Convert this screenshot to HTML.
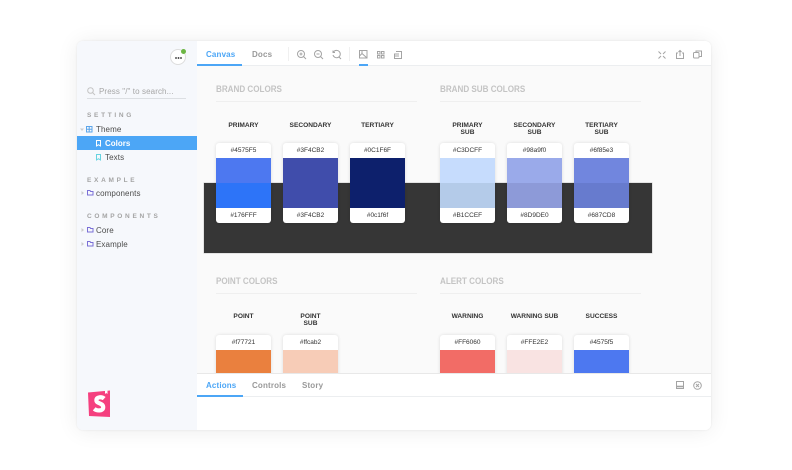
<!DOCTYPE html>
<html>
<head>
<meta charset="utf-8">
<style>
*{margin:0;padding:0;box-sizing:border-box}
html,body{width:792px;height:470px;overflow:hidden;background:#fff;font-family:"Liberation Sans",sans-serif}
.a{position:absolute}
#win{position:absolute;left:77px;top:41px;width:634px;height:389px;border-radius:6px;background:#fff;box-shadow:0 1px 22px rgba(0,0,0,.075),0 0 2px rgba(0,0,0,.08);overflow:hidden}
#page{position:absolute;left:0;top:0;width:792px;height:470px}
.t{position:absolute;white-space:nowrap;filter:blur(.3px)}
.lab{position:absolute;width:80px;text-align:center;font-size:6.6px;line-height:7.2px;font-weight:bold;color:#333;filter:blur(.25px)}
.card{position:absolute;width:55px;background:#fff;border-radius:3px;box-shadow:0 0 3px rgba(0,0,0,.12);overflow:hidden}
.hex{position:absolute;left:0;width:55px;text-align:center;font-size:6.5px;line-height:15px;height:15px;color:#333;filter:blur(.25px)}
.h2{position:absolute;font-size:9.5px;font-weight:bold;color:#c4c4c4;white-space:nowrap;transform:scaleX(.85);transform-origin:0 0;filter:blur(.25px)}
.hr{position:absolute;height:1px;background:#efefef;width:201px}
.cap{position:absolute;font-size:6.5px;font-weight:bold;color:#a4a4a4;letter-spacing:2.7px;white-space:nowrap;filter:blur(.25px)}
.nav{position:absolute;font-size:8px;color:#4c4c4c;white-space:nowrap;filter:blur(.25px);letter-spacing:.1px}
.tab{font-size:8px;line-height:10px;font-weight:bold;color:#999;letter-spacing:.15px}
svg{position:absolute;overflow:visible}
svg.i{fill:none;stroke:#a4a4a4;stroke-width:1;width:10px;height:10px;filter:blur(.2px)}
</style>
</head>
<body>
<div id="page">
<div id="win"></div>

<!-- sidebar -->
<div class="a" style="left:77px;top:41px;width:120px;height:389px;background:#f6f8fc;border-radius:6px 0 0 6px"></div>
<div class="a" style="left:170px;top:49px;width:16px;height:16px;border-radius:50%;background:#fff;border:1px solid #ddd"></div>
<div class="a" style="left:175px;top:56.5px;width:7px;height:2px;background:radial-gradient(circle at 1px 1px,#555 1px,transparent 1px) 0 0/2.5px 2px"></div>
<div class="a" style="left:181px;top:49px;width:5px;height:5px;border-radius:50%;background:#6cb644"></div>

<svg style="left:87px;top:87px;width:8px;height:8px" fill="none" stroke="#c4c4c4" stroke-width="1"><circle cx="3.5" cy="3.5" r="2.8"/><path d="M5.5 5.5L8 8"/></svg>
<div class="t" style="left:99px;top:86.5px;font-size:8px;line-height:10px;color:#a6a6a6;letter-spacing:.1px">Press "/" to search...</div>
<div class="a" style="left:87px;top:98px;width:99px;height:1px;background:#dcdfe3"></div>

<div class="cap" style="left:87px;top:112px">SETTING</div>
<svg style="left:80px;top:128px;width:5px;height:4px"><path d="M0 0.5H4L2 3Z" fill="#ccc"/></svg>
<svg style="left:86px;top:126px;width:7px;height:7px" fill="none" stroke="#5ba5ea" stroke-width="1"><rect x=".5" y=".5" width="5.5" height="5.5"/><path d="M3.2 .5V6M.5 3.2H6"/></svg>
<div class="nav" style="left:96px;top:125px;line-height:10px">Theme</div>
<div class="a" style="left:77px;top:136px;width:120px;height:14px;background:#4ca6f6"></div>
<svg style="left:96px;top:140px;width:5px;height:7px" fill="none" stroke="#fff" stroke-width="1"><path d="M.5 .5H4.5V6L2.5 4.7L.5 6Z"/></svg>
<div class="nav" style="left:105px;top:139px;line-height:10px;color:#fff;font-weight:bold;letter-spacing:0">Colors</div>
<svg style="left:96px;top:154px;width:5px;height:7px" fill="none" stroke="#66d3e0" stroke-width="1"><path d="M.5 .5H4.5V6L2.5 4.7L.5 6Z"/></svg>
<div class="nav" style="left:105px;top:153px;line-height:10px">Texts</div>

<div class="cap" style="left:87px;top:177px">EXAMPLE</div>
<svg style="left:81px;top:191px;width:4px;height:5px"><path d="M.5 0V4L3 2Z" fill="#ccc"/></svg>
<svg style="left:87px;top:190px;width:7px;height:6px" fill="none" stroke="#7a6fd6" stroke-width="1"><path d="M.5 .5H3L3.6 1.5H6V5H.5Z"/></svg>
<div class="nav" style="left:96px;top:189px;line-height:10px">components</div>

<div class="cap" style="left:87px;top:213px">COMPONENTS</div>
<svg style="left:81px;top:228px;width:4px;height:5px"><path d="M.5 0V4L3 2Z" fill="#ccc"/></svg>
<svg style="left:87px;top:227px;width:7px;height:6px" fill="none" stroke="#7a6fd6" stroke-width="1"><path d="M.5 .5H3L3.6 1.5H6V5H.5Z"/></svg>
<div class="nav" style="left:96px;top:226px;line-height:10px">Core</div>
<svg style="left:81px;top:242px;width:4px;height:5px"><path d="M.5 0V4L3 2Z" fill="#ccc"/></svg>
<svg style="left:87px;top:241px;width:7px;height:6px" fill="none" stroke="#7a6fd6" stroke-width="1"><path d="M.5 .5H3L3.6 1.5H6V5H.5Z"/></svg>
<div class="nav" style="left:96px;top:240px;line-height:10px">Example</div>

<!-- logo -->
<svg style="left:87px;top:389px;width:24px;height:29px"><path d="M1 3.5L23 1.5V28L2 27Z" fill="#f5407f"/><path d="M18 1.6L20.5 1.4V5L19.2 4L18 5Z" fill="#fff"/><path d="M17.2 9.6C15 7.6 9.4 7.6 9.4 11.2C9.4 15 16.2 13.6 16.2 18.2C16.2 22.2 10 22.2 7.2 19.8" fill="none" stroke="#fff" stroke-width="4.2"/></svg>

<!-- toolbar -->
<div class="a" style="left:197px;top:41px;width:514px;height:25px;background:#fff;border-bottom:1px solid #eceef0;border-radius:0 6px 0 0"></div>
<div class="t tab" style="left:206px;top:50px;color:#4ca6f6">Canvas</div>
<div class="t tab" style="left:252px;top:50px">Docs</div>
<div class="a" style="left:197px;top:64px;width:45px;height:2px;background:#4ca6f6"></div>
<div class="a" style="left:288px;top:47px;width:1px;height:14px;background:#f0f0f0"></div>
<div class="a" style="left:349px;top:47px;width:1px;height:14px;background:#f0f0f0"></div>
<svg class="i" style="left:297px;top:50px"><circle cx="4" cy="4" r="3.5"/><path d="M6.5 6.5L9 9M2.5 4H5.5M4 2.5V5.5"/></svg>
<svg class="i" style="left:314px;top:50px"><circle cx="4" cy="4" r="3.5"/><path d="M6.5 6.5L9 9M2.5 4H5.5"/></svg>
<svg class="i" style="left:332px;top:50px"><path d="M1.5 2A3.7 3.7 0 1 1 1 5M1 .5V2.5H3M6.5 6.5L9 9"/></svg>
<svg class="i" style="left:359px;top:50px;width:9px;height:9px"><rect x=".5" y=".5" width="7.5" height="7.5"/><path d="M.5 6L3 3.5L8 8M2 2H4"/></svg>
<div class="a" style="left:359px;top:64px;width:9px;height:2px;background:#4ca6f6"></div>
<svg class="i" style="left:377px;top:51px;width:8px;height:8px"><rect x=".5" y=".5" width="2.5" height="2.5"/><rect x="4.5" y=".5" width="2.5" height="2.5"/><rect x=".5" y="4.5" width="2.5" height="2.5"/><rect x="4.5" y="4.5" width="2.5" height="2.5"/></svg>
<svg class="i" style="left:394px;top:51px;width:8px;height:8px"><path d="M2 .5H7.5V7.5H.5V3H5M.5 5H5"/></svg>
<svg class="i" style="left:658px;top:51px;width:8px;height:8px"><path d="M.5 .5L3 3M7.5 .5L5 3M.5 7.5L3 5M7.5 7.5L5 5"/></svg>
<svg class="i" style="left:676px;top:50px;width:8px;height:9px"><path d="M2 3H.5V8.5H7.5V3H6M4 6V.5M2.5 2L4 .5L5.5 2"/></svg>
<svg class="i" style="left:693px;top:50px;width:9px;height:9px"><rect x=".5" y="2.5" width="5.5" height="5.5" rx="1"/><path d="M3 2.5V1H8.5V6.5H6"/></svg>

<!-- canvas -->
<div class="a" style="left:197px;top:66px;width:514px;height:307px;background:#fafafa"></div>
<div class="a" style="left:204px;top:183px;width:448px;height:70px;background:#363636;box-shadow:0 0 0 .5px #ccc"></div>

<div class="h2" style="left:216px;top:84px">BRAND COLORS</div>
<div class="hr" style="left:216px;top:101px"></div>
<div class="h2" style="left:440px;top:84px">BRAND SUB COLORS</div>
<div class="hr" style="left:440px;top:101px"></div>

<div class="lab" style="left:203.5px;top:121.5px">PRIMARY</div>
<div class="lab" style="left:270.5px;top:121.5px">SECONDARY</div>
<div class="lab" style="left:337.5px;top:121.5px">TERTIARY</div>
<div class="lab" style="left:427.5px;top:121.5px">PRIMARY<br>SUB</div>
<div class="lab" style="left:494.5px;top:121.5px">SECONDARY<br>SUB</div>
<div class="lab" style="left:561.5px;top:121.5px">TERTIARY<br>SUB</div>

<div class="card" style="left:216px;top:143px;height:80px"><div class="hex" style="top:0">#4575F5</div><div class="a" style="left:0;top:15px;width:55px;height:25px;background:#4d78f0"></div><div class="a" style="left:0;top:40px;width:55px;height:25px;background:#2d74f8"></div><div class="hex" style="top:65px">#176FFF</div></div>
<div class="card" style="left:283px;top:143px;height:80px"><div class="hex" style="top:0">#3F4CB2</div><div class="a" style="left:0;top:15px;width:55px;height:50px;background:#404dab"></div><div class="hex" style="top:65px">#3F4CB2</div></div>
<div class="card" style="left:350px;top:143px;height:80px"><div class="hex" style="top:0">#0C1F6F</div><div class="a" style="left:0;top:15px;width:55px;height:50px;background:#0d206c"></div><div class="hex" style="top:65px">#0c1f6f</div></div>
<div class="card" style="left:440px;top:143px;height:80px"><div class="hex" style="top:0">#C3DCFF</div><div class="a" style="left:0;top:15px;width:55px;height:25px;background:#c6dcfd"></div><div class="a" style="left:0;top:40px;width:55px;height:25px;background:#b4cbe9"></div><div class="hex" style="top:65px">#B1CCEF</div></div>
<div class="card" style="left:507px;top:143px;height:80px"><div class="hex" style="top:0">#98a9f0</div><div class="a" style="left:0;top:15px;width:55px;height:25px;background:#9aaaea"></div><div class="a" style="left:0;top:40px;width:55px;height:25px;background:#8d9ad8"></div><div class="hex" style="top:65px">#8D9DE0</div></div>
<div class="card" style="left:574px;top:143px;height:80px"><div class="hex" style="top:0">#6f85e3</div><div class="a" style="left:0;top:15px;width:55px;height:25px;background:#7186de"></div><div class="a" style="left:0;top:40px;width:55px;height:25px;background:#677bce"></div><div class="hex" style="top:65px">#687CD8</div></div>

<div class="h2" style="left:216px;top:276px">POINT COLORS</div>
<div class="hr" style="left:216px;top:293px"></div>
<div class="h2" style="left:440px;top:276px">ALERT COLORS</div>
<div class="hr" style="left:440px;top:293px"></div>

<div class="lab" style="left:203.5px;top:313px">POINT</div>
<div class="lab" style="left:270.5px;top:313px">POINT<br>SUB</div>
<div class="lab" style="left:427.5px;top:313px">WARNING</div>
<div class="lab" style="left:494.5px;top:313px">WARNING SUB</div>
<div class="lab" style="left:561.5px;top:313px">SUCCESS</div>

<div class="card" style="left:216px;top:335px;height:60px"><div class="hex" style="top:0">#f77721</div><div class="a" style="left:0;top:15px;width:55px;height:45px;background:#ea803e"></div></div>
<div class="card" style="left:283px;top:335px;height:60px"><div class="hex" style="top:0">#ffcab2</div><div class="a" style="left:0;top:15px;width:55px;height:45px;background:#f7ccb7"></div></div>
<div class="card" style="left:440px;top:335px;height:60px"><div class="hex" style="top:0">#FF6060</div><div class="a" style="left:0;top:15px;width:55px;height:45px;background:#f26c66"></div></div>
<div class="card" style="left:507px;top:335px;height:60px"><div class="hex" style="top:0">#FFE2E2</div><div class="a" style="left:0;top:15px;width:55px;height:45px;background:#f9e3e2"></div></div>
<div class="card" style="left:574px;top:335px;height:60px"><div class="hex" style="top:0">#4575f5</div><div class="a" style="left:0;top:15px;width:55px;height:45px;background:#4d78f0"></div></div>

<!-- bottom panel -->
<div class="a" style="left:197px;top:373px;width:514px;height:57px;background:#fff;border-top:1px solid #e8e8e8;border-radius:0 0 6px 0"></div>
<div class="a" style="left:197px;top:396px;width:514px;height:1px;background:#eceef0"></div>
<div class="t tab" style="left:206px;top:380.5px;color:#4ca6f6">Actions</div>
<div class="t tab" style="left:252px;top:380.5px">Controls</div>
<div class="t tab" style="left:302px;top:380.5px">Story</div>
<div class="a" style="left:197px;top:395px;width:46px;height:2px;background:#4ca6f6"></div>
<svg class="i" style="left:676px;top:381px;width:8px;height:8px"><rect x=".5" y=".5" width="7" height="7"/><path d="M.5 5.5H7.5" stroke-width="1.6"/></svg>
<svg class="i" style="left:693px;top:381px;width:9px;height:9px"><circle cx="4.5" cy="4.5" r="3.8"/><path d="M3 3L6 6M6 3L3 6"/></svg>
</div>
</body>
</html>
